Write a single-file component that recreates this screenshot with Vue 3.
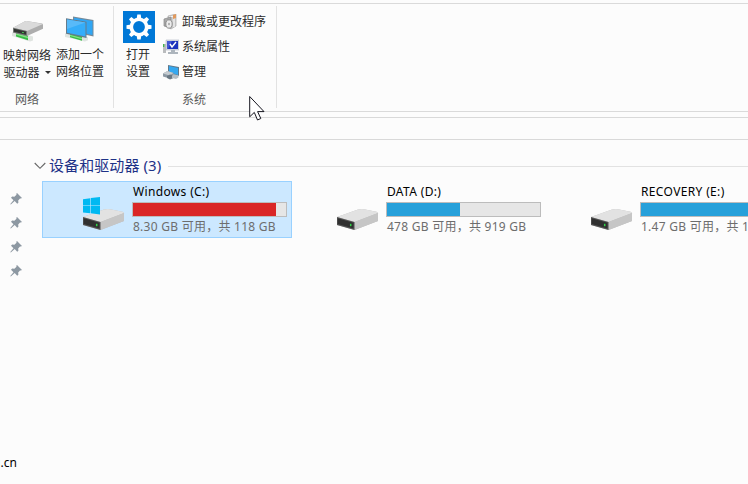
<script setup>
const drives = [
  { name: 'Windows (C:)', info: '8.30 GB 可用，共 118 GB', used: 93.7, color: '#da2626', selected: true, system: true },
  { name: 'DATA (D:)', info: '478 GB 可用，共 919 GB', used: 48, color: '#26a0da' },
  { name: 'RECOVERY (E:)', info: '1.47 GB 可用，共 12.0 GB', used: 90, color: '#26a0da' }
]
</script>

<template>
  <div class="window">
    <header class="ribbon">
      <section class="group network">
        <div class="tools">
          <div class="big map">
            <svg width="32" height="32" viewBox="0 0 32 32">
              <path d="M1 21.5l3-1 18 5v4l-3 1L1 25z" fill="#dfe4e0" />
              <path d="M5 21l12 3.4v4.8L5 25.6z" fill="#37bd45" />
              <path d="M5 22.3l12 3.4v1.5L5 23.8z" fill="#83e184" />
              <path d="M2 16.8L14 10.3q1.2-.5 3-.1L31 12.5q1 .3 1 1.3v4L16 25 2 21.4z" fill="#adadad" />
              <path d="M2 16.8L14 10.3q1.2-.5 3-.1L32 13 16 20z" fill="#dadada" />
              <path d="M2 16.8L16 20v5L2 21.4z" fill="#747774" />
              <path d="M3 17.8l12 2.8v3.2L3 20.8z" fill="#313531" />
              <path d="M11 21.3l2 .5" stroke="#48bb54" />
            </svg>
            <span>映射网络</span><span>驱动器<i class="caret"></i></span>
          </div>
          <div class="big add">
            <svg width="32" height="32" viewBox="0 0 32 32">
              <path d="M9 5.5L29.5 9v16.5L9 21z" fill="#758a99" />
              <path d="M10 6.7l18.5 3.2v14L10 20z" fill="#30a6f4" />
              <path d="M1 22.4l4-1.2 19 5v3l-3 1.3L1 26z" fill="#dfe5e1" />
              <path d="M6 22.2l12 3v4.5L6 26.3z" fill="#37bd45" />
              <path d="M6 23.8l12 3.2v1.2L6 25z" fill="#83e184" />
              <path d="M2 7.3L22.5 10.7V27L2 22.7z" fill="#657b8b" />
              <path d="M3 8.6l18.5 3v14L3 21.8z" fill="#35adf9" />
              <path d="M3 8.6l18.5 3L3 18z" fill="#58baf9" />
            </svg>
            <span>添加一个</span><span>网络位置</span>
          </div>
        </div>
        <footer>网络</footer>
      </section>
      <section class="group system">
        <div class="tools">
          <div class="big settings">
            <svg width="32" height="32" viewBox="0 0 32 32">
              <path fill="#0078d7" d="M0 0h32v32H0z" />
              <g fill="#fff">
                <path v-for="n in 8" :key="n" d="M13.6 8l.7-4.5h3.4l.7 4.5z" :transform="`rotate(${n * 45} 16 16)`" />
              </g>
              <circle cx="16" cy="16" r="7.7" fill="none" stroke="#fff" stroke-width="3.6" />
            </svg>
            <span>打开</span><span>设置</span>
          </div>
          <div class="commands">
            <div class="command">
              <svg width="16" height="16" viewBox="0 0 16 16">
                <path d="M5 2l8-2v12l-5 3-3-2z" fill="#d0d0d0" stroke="#aaa" stroke-width=".7" />
                <path d="M6 3l6-1M11 2v11" stroke="#f8f8f8" />
                <path d="M10 1l3-1v4l-3 1z" fill="#e29a5d" />
                <path d="M1 5l7-2v11l-7-2z" fill="#aaa" stroke="#888" stroke-width=".7" />
                <ellipse cx="6" cy="10" rx="3.2" ry="4.2" fill="#ebebeb" stroke="#838383" stroke-width=".9" />
                <ellipse cx="6" cy="10" rx="1.2" ry="1.7" fill="#999" stroke="#fff" stroke-width=".6" />
              </svg>
              <span>卸载或更改程序</span>
            </div>
            <div class="command">
              <svg width="16" height="16" viewBox="0 0 16 16">
                <path d="M0 5h3v9H0z" fill="#babcbe" /><path d="M0 5h1.3v3H0z" fill="#42b54b" />
                <path d="M3 1h13v10H3z" fill="#d8dce5" stroke="#afb6c2" stroke-width=".6" />
                <path d="M4 2h11v8H4z" fill="#1b32bd" /><path d="M4 2h5L5 10H4z" fill="#4256d2" />
                <path d="M7 5l2 3 4-5" fill="none" stroke="#fff" stroke-width="1.4" />
                <path d="M8 11h4v2h3v2H5v-2h3z" fill="#adb5bd" />
              </svg>
              <span>系统属性</span>
            </div>
            <div class="command">
              <svg width="16" height="16" viewBox="0 0 16 16">
                <path d="M5 1l11 2v9L5 9z" fill="#60798b" /><path d="M6 2l9 2v7L6 8z" fill="#35a8f0" />
                <path d="M0 9.5L4.5 7l6 2v4l-4 1.5L0 12.5z" fill="#8c99a4" /><path d="M0 9.5L4.5 7l6 2-4 2.5z" fill="#c5cbd0" />
                <path d="M4 12l3-1.5 3 1v2.8L7 15.5 4 14z" fill="#6a7883" /><path d="M9 11.5l3-1 3.5 1v2L13 15l-4-1z" fill="#b4bdc4" />
              </svg>
              <span>管理</span>
            </div>
          </div>
        </div>
        <footer>系统</footer>
      </section>
    </header>
    <div class="address"></div>
    <div class="body">
      <nav>
        <svg v-for="n in 4" :key="n" width="12" height="12" viewBox="0 0 12 12">
          <path d="M7 0l5 5-1.2.6-.8-.2-1.8 2 .2 2.3-1.2 1-2.5-2.6L.8 11.4.3 11l3.2-3.8L1 4.7 2.2 3.6l2.2.2 2.1-2-.2-1z" fill="#8d98a2" />
        </svg>
        <span class="link">u.cn</span>
      </nav>
      <main>
        <h1>
          <svg width="12" height="8" viewBox="0 0 12 8"><path d="M.7 1l5.3 5.3L11.3 1" fill="none" stroke="#666" stroke-width="1.1" /></svg>
          <span>设备和驱动器 (3)</span><i class="rule"></i>
        </h1>
        <div class="drives">
          <article v-for="d in drives" :key="d.name" :class="{ selected: d.selected }">
            <svg class="disk" width="44" height="36" viewBox="0 0 44 36">
              <path d="M1 20L22 12.6Q25 11.6 28 12.2L40.5 14.8Q42 15.2 42 16.5v7.5L18.5 33 1 28z" fill="#bdbdbd" />
              <path d="M1 20L22 12.6Q25 11.6 28 12.2L40.5 14.8Q41.5 15 42 16L18.5 25z" fill="#e2e2e2" />
              <path d="M18.5 25L42 16v8L18.5 33z" fill="#c6c6c6" />
              <path d="M1 20l17.5 5v8L1 28z" fill="#555" />
              <path d="M1.7 21.2l15.8 4.6v5.7L1.7 27z" fill="#303030" />
              <path d="M14.7 26.8v2.4" stroke="#31d448" stroke-width="1.5" />
              <g v-if="d.system" fill="#00b9f2">
                <path d="M1 2.2l7.3-1v7.3H1zM8.9 1.1L18 0v8.5H8.9zM1 9.1h7.3v7.1L1 15.4zM8.9 9.1H18v8.5l-9.1-1.3z" />
              </g>
            </svg>
            <div class="details">
              <strong>{{ d.name }}</strong>
              <div class="bar"><i :style="{ width: d.used + '%', background: d.color }"></i></div>
              <small>{{ d.info }}</small>
            </div>
          </article>
        </div>
      </main>
    </div>
    <svg class="cursor" width="17" height="26" viewBox="0 0 17 26">
      <path d="M.7 .5v20.3l4.6-4.4 3.2 7.6 3.3-1.5-3.2-6.9h6.4z" fill="#fff" stroke="#15151f" stroke-width="1" />
    </svg>
  </div>
</template>

<style>
body { overflow: hidden; background: #fcfcfc; }
</style>
<style scoped>
* { box-sizing: border-box; }
.window { position: relative; width: 748px; height: 484px; overflow: hidden; padding-top: 3px; background: #fcfcfc; font: 12px/16px "Noto Sans", "Noto Sans CJK SC", sans-serif; color: #2b2b2b; }
svg { display: block; flex: none; }
.ribbon { height: 109px; border-top: 1px solid #dadada; border-bottom: 1px solid #dadada; display: flex; padding-top: 2px; }
.group { height: 102px; border-right: 1px solid #e2e2e2; display: flex; flex-direction: column; }
.network { width: 114px; }
.system { width: 163px; }
.tools { display: flex; height: 86px; }
.big { display: flex; flex-direction: column; align-items: center; white-space: nowrap; padding-top: 5px; width: 48px; line-height: 17px; }
.big svg { margin-bottom: 3px; }
.map { margin-left: 3px; }
.map span, .map span + span { position: relative; top: 1px; }
.add { margin-left: 5px; }
.settings { width: 32px; margin-left: 9px; }
.settings span { margin-left: -2px; }
.caret { display: inline-block; border: 3px solid transparent; border-top-color: #333; border-bottom: 0; margin: 0 0 3px 5px; }
.group footer { line-height: 16px; color: #5a5a5a; }
.network footer { padding-left: 15px; }
.system footer { padding-left: 68px; }
.commands { padding: 3px 0 0 8px; }
.command { display: flex; align-items: center; height: 25px; gap: 3px; white-space: nowrap; }
.address { height: 23px; margin-top: 5px; border-top: 1px solid #d9d9d9; border-bottom: 1px solid #d9d9d9; }
.body { display: flex; height: 344px; }
nav { width: 42px; display: flex; flex-direction: column; padding: 53px 0 0 10px; gap: 12px; }
.link { color: #000; margin: 166px 0 0 -17px; }
main { width: 706px; padding-top: 16px; }
h1 { display: flex; align-items: center; margin: 0 0 0 -8px; height: 20px; font-size: 15px; font-weight: 400; color: #1e3287; white-space: nowrap; }
h1 span { margin: -2px 0 0 3px; letter-spacing: .08px; }
.rule { flex: 1; height: 1px; background: #e2e2e2; margin-left: 7px; }
.drives { display: flex; gap: 4px; margin-top: 5px; }
article { width: 250px; flex: none; height: 57px; border: 1px solid transparent; display: flex; padding: 2px 4px 0 39px; }
article.selected { border-color: #99d1ff; background: #cce8ff; }
article .disk { margin: 13px 6px 0 0; }
.selected .disk path { shape-rendering: auto; }
.details { width: 155px; white-space: nowrap; }
strong { display: block; font-weight: 400; color: #000; height: 18px; line-height: 16px; padding-left: 1px; letter-spacing: .35px; }
.bar { height: 15px; border: 1px solid #bcbcbc; background: #e6e6e6; }
.bar i { display: block; height: 100%; }
small { display: block; font-size: 12px; line-height: 16px; margin-top: 2px; padding-left: 1px; color: #6d6d6d; letter-spacing: .26px; }
.cursor { position: absolute; left: 249px; top: 96px; }
</style>
